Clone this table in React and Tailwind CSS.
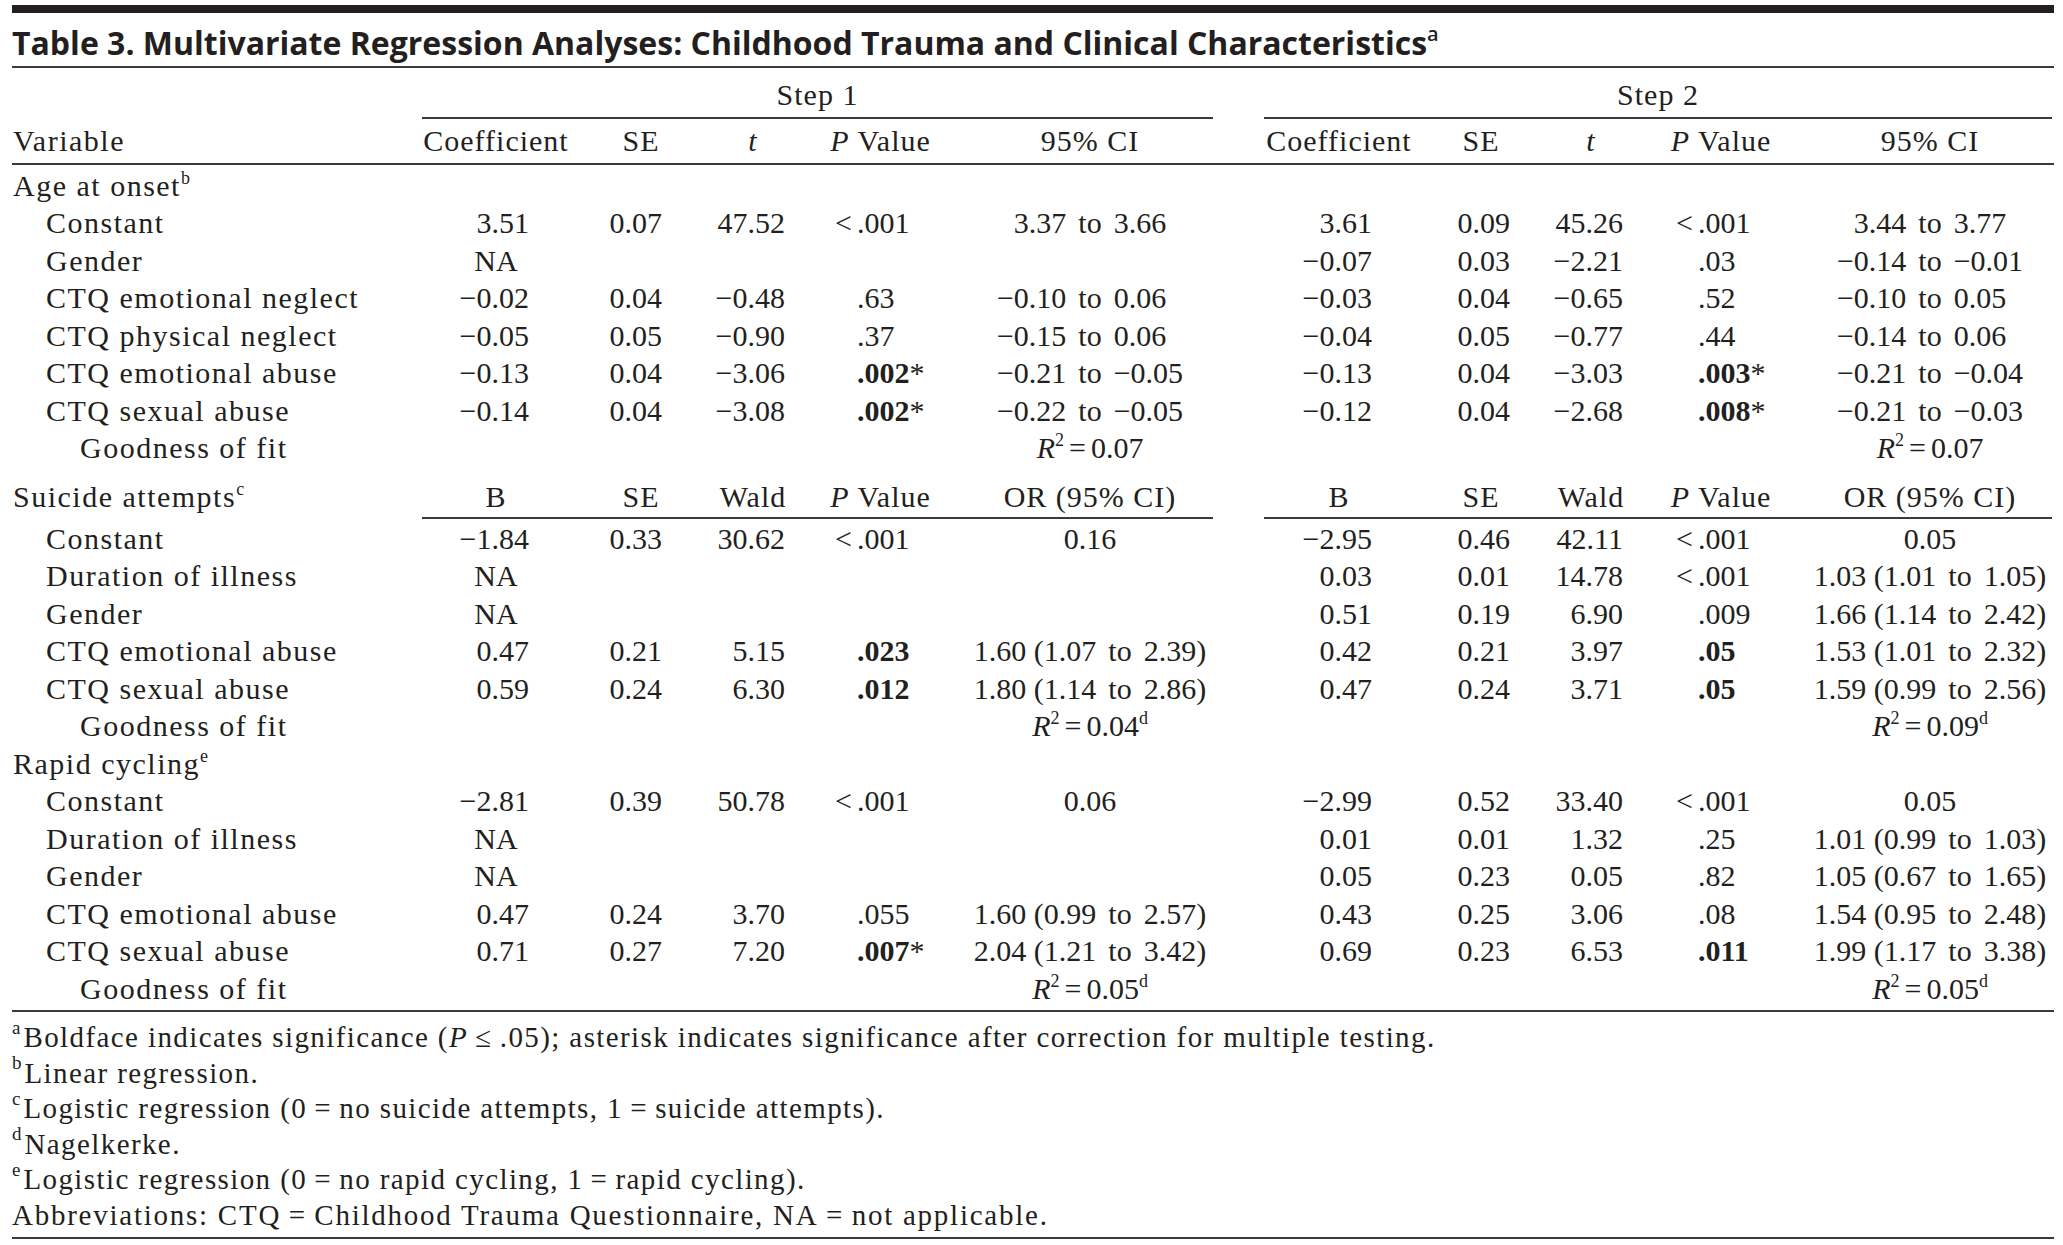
const GRID = 'grid grid-cols-[408px_152px_138px_86px_169px_250px_47px_154px_130px_90px_170px_248px]';

// right padding of the right-aligned number columns, per step
const PAD = [
  ['pr-[43px]', 'pr-[48px]', 'pr-[11px]'],
  ['pr-[44px]', 'pr-[36px]', 'pr-[13px]'],
];
// width of the "<" slot before the decimal point in the P column
const PSLOT = ['w-[61px]', 'w-[62px]'];

const RULE = 'bg-[#3a3a3a]';

const AGE = [
  ['Constant', ['3.51', '0.07', '47.52', '<.001', '3.37 to 3.66'], ['3.61', '0.09', '45.26', '<.001', '3.44 to 3.77']],
  ['Gender', ['NA', null, null, null, null], ['−0.07', '0.03', '−2.21', '.03', '−0.14 to −0.01']],
  ['CTQ emotional neglect', ['−0.02', '0.04', '−0.48', '.63', '−0.10 to 0.06'], ['−0.03', '0.04', '−0.65', '.52', '−0.10 to 0.05']],
  ['CTQ physical neglect', ['−0.05', '0.05', '−0.90', '.37', '−0.15 to 0.06'], ['−0.04', '0.05', '−0.77', '.44', '−0.14 to 0.06']],
  ['CTQ emotional abuse', ['−0.13', '0.04', '−3.06', '!.002*', '−0.21 to −0.05'], ['−0.13', '0.04', '−3.03', '!.003*', '−0.21 to −0.04']],
  ['CTQ sexual abuse', ['−0.14', '0.04', '−3.08', '!.002*', '−0.22 to −0.05'], ['−0.12', '0.04', '−2.68', '!.008*', '−0.21 to −0.03']],
  ['Goodness of fit', [null, null, null, null, 'R2:0.07'], [null, null, null, null, 'R2:0.07'], 2],
];

const SUICIDE = [
  ['Constant', ['−1.84', '0.33', '30.62', '<.001', '0.16'], ['−2.95', '0.46', '42.11', '<.001', '0.05']],
  ['Duration of illness', ['NA', null, null, null, null], ['0.03', '0.01', '14.78', '<.001', '1.03 (1.01 to 1.05)']],
  ['Gender', ['NA', null, null, null, null], ['0.51', '0.19', '6.90', '.009', '1.66 (1.14 to 2.42)']],
  ['CTQ emotional abuse', ['0.47', '0.21', '5.15', '!.023', '1.60 (1.07 to 2.39)'], ['0.42', '0.21', '3.97', '!.05', '1.53 (1.01 to 2.32)']],
  ['CTQ sexual abuse', ['0.59', '0.24', '6.30', '!.012', '1.80 (1.14 to 2.86)'], ['0.47', '0.24', '3.71', '!.05', '1.59 (0.99 to 2.56)']],
  ['Goodness of fit', [null, null, null, null, 'R2:0.04:d'], [null, null, null, null, 'R2:0.09:d'], 2],
];

const RAPID = [
  ['Constant', ['−2.81', '0.39', '50.78', '<.001', '0.06'], ['−2.99', '0.52', '33.40', '<.001', '0.05']],
  ['Duration of illness', ['NA', null, null, null, null], ['0.01', '0.01', '1.32', '.25', '1.01 (0.99 to 1.03)']],
  ['Gender', ['NA', null, null, null, null], ['0.05', '0.23', '0.05', '.82', '1.05 (0.67 to 1.65)']],
  ['CTQ emotional abuse', ['0.47', '0.24', '3.70', '.055', '1.60 (0.99 to 2.57)'], ['0.43', '0.25', '3.06', '.08', '1.54 (0.95 to 2.48)']],
  ['CTQ sexual abuse', ['0.71', '0.27', '7.20', '!.007*', '2.04 (1.21 to 3.42)'], ['0.69', '0.23', '6.53', '!.011', '1.99 (1.17 to 3.38)']],
  ['Goodness of fit', [null, null, null, null, 'R2:0.05:d'], [null, null, null, null, 'R2:0.05:d'], 2],
];

function Sup({ children }) {
  return <sup className="text-[18px] -top-[0.65em]">{children}</sup>;
}

function To() {
  return <span className="px-[12px]">to</span>;
}

function PCell({ v, step }) {
  let s = v;
  const bold = s.startsWith('!');
  if (bold) s = s.slice(1);
  const star = s.endsWith('*');
  if (star) s = s.slice(0, -1);
  const lt = s.startsWith('<');
  if (lt) s = s.slice(1);
  return (
    <div className="flex">
      <span className={`${PSLOT[step]} text-right pr-[5px]`}>{lt ? '<' : ''}</span>
      <span className={bold ? 'font-bold' : ''}>{s}</span>
      {star && <span>*</span>}
    </div>
  );
}

function Stat({ v }) {
  if (v.startsWith('R2:')) {
    const [, val, note] = v.split(':');
    return (
      <div className="text-center">
        <i>R</i>
        <Sup>2</Sup>
        <span className="px-[5px]">=</span>
        {val}
        {note && <Sup>{note}</Sup>}
      </div>
    );
  }
  if (v.includes('(')) {
    const [a, b] = v.split(' to ');
    return (
      <div className="text-center">
        {a}
        <To />
        {b}
      </div>
    );
  }
  if (v.includes(' to ')) {
    const [a, b] = v.split(' to ');
    return (
      <div className="grid grid-cols-[1fr_auto_1fr]">
        <span className="text-right">{a}</span>
        <To />
        <span>{b}</span>
      </div>
    );
  }
  return <div className="text-center">{v}</div>;
}

function Cell({ v, step, i }) {
  if (v == null) return <div />;
  if (i < 3) {
    if (v === 'NA') return <div className="text-center">NA</div>;
    return <div className={`text-right ${PAD[step][i]}`}>{v}</div>;
  }
  if (i === 3) return <PCell v={v} step={step} />;
  return <Stat v={v} />;
}

function Label({ children, level = 0 }) {
  const pad = level === 2 ? 'pl-[68px]' : level === 1 ? 'pl-[34px]' : 'pl-[1px]';
  return <div className={`${pad} tracking-[1.5px] whitespace-nowrap`}>{children}</div>;
}

function Row({ label, s1, s2, level = 1 }) {
  return (
    <div className={`${GRID} h-[37.5px] items-center`}>
      <Label level={level}>{label}</Label>
      {s1.map((v, i) => (
        <Cell key={i} v={v} step={0} i={i} />
      ))}
      <div />
      {s2.map((v, i) => (
        <Cell key={i} v={v} step={1} i={i} />
      ))}
    </div>
  );
}

function HeadCells({ cols }) {
  return cols.map((c, i) => (
    <div key={i} className="text-center tracking-[1px] whitespace-nowrap">
      {c}
    </div>
  ));
}

function StepRule() {
  return (
    <div className={`${GRID} h-[2px]`}>
      <div />
      <div className={`col-span-5 mx-[2px] ${RULE}`} />
      <div />
      <div className={`col-span-5 mx-[2px] ${RULE}`} />
    </div>
  );
}

const PVAL = (
  <>
    <i>P</i> Value
  </>
);
const LINEAR_HEAD = ['Coefficient', 'SE', <i key="t">t</i>, PVAL, '95% CI'];
const LOGIT_HEAD = ['B', 'SE', 'Wald', PVAL, 'OR (95% CI)'];

function Group({ rows }) {
  return rows.map(([label, s1, s2, level]) => <Row key={label} label={label} s1={s1} s2={s2} level={level || 1} />);
}

const NOTES = [
  [
    'a',
    <>
      Boldface indicates significance (<i>P</i>
      {'\u2009≤\u2009.05); asterisk indicates significance after correction for multiple testing.'}
    </>,
  ],
  ['b', 'Linear regression.'],
  ['c', 'Logistic regression (0\u2009=\u2009no suicide attempts, 1\u2009=\u2009suicide attempts).'],
  ['d', 'Nagelkerke.'],
  ['e', 'Logistic regression (0\u2009=\u2009no rapid cycling, 1\u2009=\u2009rapid cycling).'],
  [null, 'Abbreviations: CTQ\u2009=\u2009Childhood Trauma Questionnaire, NA\u2009=\u2009not applicable.', 'tracking-[1.75px]'],
];

export default function App() {
  return (
    <div className="w-[2063px] h-[1245px] bg-white text-[#231f20] overflow-hidden">
      <div className="ml-[12px] w-[2042px] pt-[5px] font-['Liberation_Serif','Times_New_Roman',serif] text-[30px] leading-[37.5px]">
        {/* top bar */}
        <div className="h-[8px] bg-[#231f20]" />

        {/* title */}
        <div className="h-[53px] pt-[11px]">
          <h1 className="font-['Open_Sans',sans-serif] font-bold text-[32px] leading-[38px] whitespace-nowrap">
            Table 3. Multivariate Regression Analyses: Childhood Trauma and Clinical Characteristics
            <sup className="text-[20px] -top-[0.7em] font-semibold">a</sup>
          </h1>
        </div>
        <div className={`h-[2px] ${RULE}`} />

        {/* step labels */}
        <div className={`${GRID} h-[49px] pt-[8px]`}>
          <div />
          <div className="col-span-5 text-center tracking-[1px]">Step 1</div>
          <div />
          <div className="col-span-5 text-center tracking-[1px]">Step 2</div>
        </div>
        <StepRule />

        {/* column heads */}
        <div className={`${GRID} h-[44px] items-center`}>
          <Label>Variable</Label>
          <HeadCells cols={LINEAR_HEAD} />
          <div />
          <HeadCells cols={LINEAR_HEAD} />
        </div>
        <div className={`h-[2px] ${RULE}`} />

        {/* age at onset */}
        <div className="mt-[1.5px]">
          <div className="h-[37.5px] flex items-center">
            <Label>
              Age at onset<Sup>b</Sup>
            </Label>
          </div>
          <Group rows={AGE} />
        </div>

        {/* suicide attempts */}
        <div className={`${GRID} h-[50px] items-end pb-[1px]`}>
          <Label>
            Suicide attempts<Sup>c</Sup>
          </Label>
          <HeadCells cols={LOGIT_HEAD} />
          <div />
          <HeadCells cols={LOGIT_HEAD} />
        </div>
        <StepRule />
        <div className="mt-[1px]">
          <Group rows={SUICIDE} />
        </div>

        {/* rapid cycling */}
        <div className="h-[37.5px] flex items-center">
          <Label>
            Rapid cycling<Sup>e</Sup>
          </Label>
        </div>
        <Group rows={RAPID} />

        <div className={`mt-[3px] h-[2px] ${RULE}`} />

        {/* footnotes */}
        <div className="mt-[8px] text-[29px] leading-[35.5px] tracking-[1.4px]">
          {NOTES.map(([mark, text, extra], i) => (
            <div key={i} className={`whitespace-nowrap ${extra || ''}`}>
              {mark && <sup className="text-[19px] -top-[0.7em] tracking-normal pr-[3px]">{mark}</sup>}
              {text}
            </div>
          ))}
        </div>
        <div className={`mt-[4px] h-[2px] ${RULE}`} />
      </div>
    </div>
  );
}
